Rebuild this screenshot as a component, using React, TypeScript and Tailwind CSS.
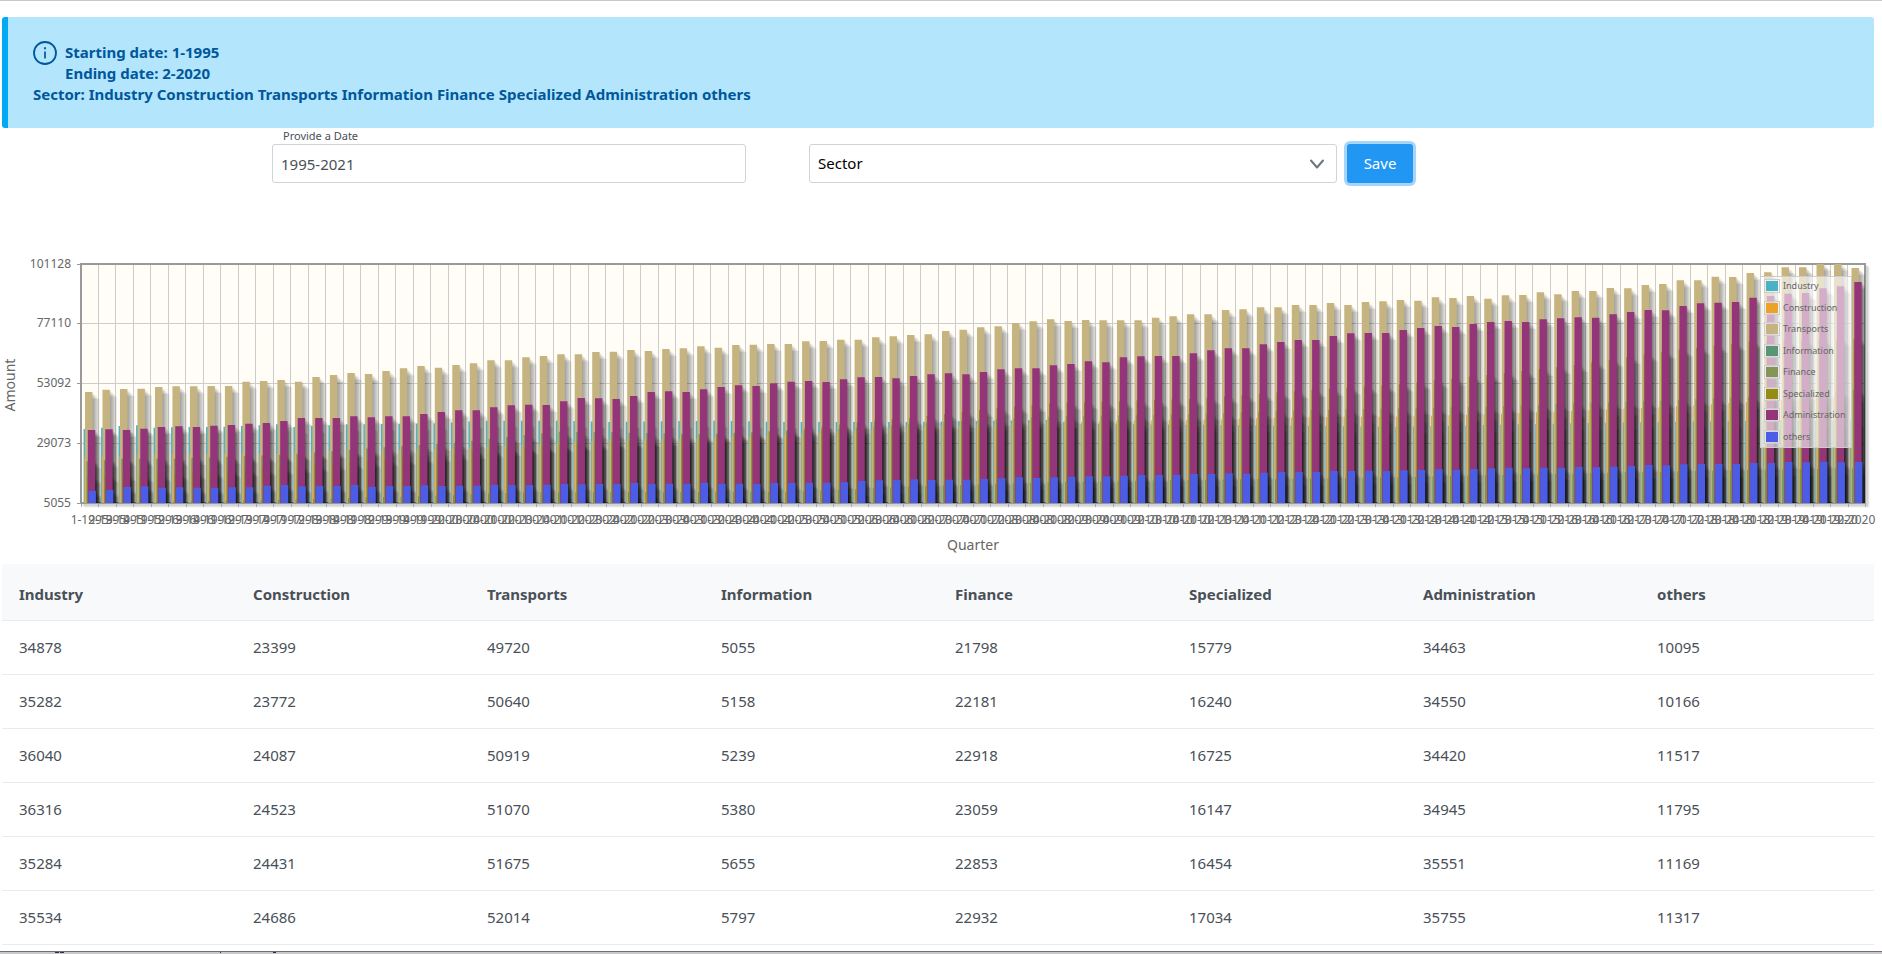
import React, { useState } from "react";

const SECTORS = [
  { name: "Industry", color: "#4bb2c5" },
  { name: "Construction", color: "#eaa228" },
  { name: "Transports", color: "#c5b47f" },
  { name: "Information", color: "#579575" },
  { name: "Finance", color: "#839557" },
  { name: "Specialized", color: "#958c12" },
  { name: "Administration", color: "#953579" },
  { name: "others", color: "#4b5de4" },
];

const ROWS = [
  [34878, 23399, 49720, 5055, 21798, 15779, 34463, 10095],
  [35282, 23772, 50640, 5158, 22181, 16240, 34550, 10166],
  [36040, 24087, 50919, 5239, 22918, 16725, 34420, 11517],
  [36316, 24523, 51070, 5380, 23059, 16147, 34945, 11795],
  [35284, 24431, 51675, 5655, 22853, 16454, 35551, 11169],
  [35534, 24686, 52014, 5797, 22932, 17034, 35755, 11317],
];

const QUARTERS = Array.from({ length: 102 }, (_, i) => `${(i % 4) + 1}-${1995 + Math.floor(i / 4)}`);

/* Plot geometry */
const LEFT = 81;
const RIGHT = 1865;
const TOP = 34;
const BOTTOM = 273;
const STEP = (RIGHT - LEFT) / QUARTERS.length;
const BAR_WIDTH = 7.4;
const BAR_SHIFT = 0.7;
const DEPTH = 744;

/* Bar levels are stored in thirds of a unit measured down from the chart's origin. */
type Keys = [number, number][];
const between = (keys: Keys) =>
  QUARTERS.map((_, i) => {
    const next = keys.findIndex(([k]) => k >= i);
    if (keys[next][0] === i) return keys[next][1];
    const [a, va] = keys[next - 1];
    const [b, vb] = keys[next];
    return va + ((vb - va) * (i - a)) / (b - a);
  });

const industry = between([
  [0, 522], [1, 518], [2, 513], [3, 511], [4, 518], [5, 517], [8, 515], [10, 511], [11, 508], [12, 516],
  [15, 508], [20, 505], [23, 497], [27, 497], [30, 501], [33, 499], [36, 497], [40, 501], [47, 501], [55, 495],
  [57, 507], [65, 510], [70, 512], [75, 516], [80, 510], [85, 505], [90, 501], [95, 498], [101, 496],
]);
const construction = between([
  [0, 607], [1, 604], [2, 602], [3, 599], [5, 597], [11, 595], [15, 586], [20, 582], [25, 570], [30, 555],
  [35, 550], [40, 539], [45, 524], [47, 515], [52, 508], [55, 499], [57, 500], [63, 495], [70, 486], [75, 485],
  [80, 478], [85, 468], [90, 457], [95, 441], [101, 422],
]);
const transports = [
  411, 404, 402, 401, 396, 394, 394, 393, 393, 380, 378, 375, 380, 366, 360, 354, 357, 348, 340, 333, 338, 330,
  325, 316, 316, 307, 303, 298, 298, 291, 290, 285, 288, 282, 280, 274, 278, 270, 269, 267, 267, 259, 258, 254,
  254, 247, 244, 240, 238, 228, 224, 217, 214, 204, 199, 193, 198, 195, 196, 196, 196, 188, 184, 178, 178, 165,
  163, 157, 157, 150, 150, 144, 150, 141, 139, 135, 137, 127, 129, 123, 131, 121, 120, 112, 118, 108, 108, 99,
  100, 90, 87, 76, 76, 65, 66, 54, 52, 37, 37, 26, 26, 39,
];
const information = between([
  [0, 744], [3, 742], [11, 735], [20, 722], [25, 712], [40, 710], [45, 700], [47, 695], [55, 682], [63, 675],
  [75, 667], [85, 655], [95, 645], [101, 640],
]);
const finance = between([
  [0, 619], [1, 616], [2, 611], [5, 611], [11, 600], [17, 577], [21, 563], [25, 540], [27, 530], [30, 532],
  [35, 537], [40, 528], [45, 515], [47, 506], [55, 485], [63, 478], [70, 465], [75, 460], [80, 455], [85, 445],
  [90, 437], [95, 425], [101, 405],
]);
const specialized = between([
  [0, 664], [1, 661], [2, 657], [3, 661], [5, 655], [11, 638], [20, 600], [25, 578], [30, 560], [35, 545],
  [40, 525], [45, 497], [47, 490], [50, 470], [55, 445], [63, 432], [70, 405], [75, 388], [80, 360], [85, 330],
  [90, 290], [95, 260], [101, 251],
]);
const administration = [
  525, 523, 525, 521, 516, 514, 516, 512, 510, 506, 504, 498, 489, 489, 489, 484, 487, 484, 484, 477, 471, 466,
  466, 457, 451, 449, 450, 439, 429, 430, 432, 423, 411, 409, 411, 403, 396, 391, 393, 385, 380, 378, 381, 373,
  367, 366, 370, 363, 358, 355, 358, 351, 343, 340, 340, 331, 327, 319, 322, 307, 304, 303, 303, 295, 286, 280,
  280, 268, 261, 255, 255, 243, 235, 234, 234, 225, 219, 213, 216, 207, 201, 198, 201, 193, 190, 187, 188, 178,
  171, 165, 166, 153, 145, 143, 141, 128, 123, 116, 114, 100, 94, 81,
];
const others = [
  707, 705, 696, 694, 698, 697, 698, 698, 697, 697, 692, 690, 694, 693, 693, 690, 695, 693, 693, 691, 693, 692,
  692, 689, 690, 690, 689, 687, 688, 687, 687, 684, 687, 686, 686, 683, 687, 686, 687, 684, 684, 683, 683, 682,
  678, 676, 675, 673, 675, 674, 674, 672, 670, 667, 669, 667, 665, 664, 664, 662, 660, 660, 659, 657, 657, 655,
  656, 653, 651, 651, 651, 648, 648, 647, 648, 646, 645, 643, 644, 642, 640, 638, 640, 638, 638, 636, 637, 635,
  633, 630, 631, 628, 627, 627, 627, 624, 624, 621, 622, 620, 622, 621,
];

const SERIES = [industry, construction, transports, information, finance, specialized, administration, others];

const barPath = (levels: number[], series: number, shift: number) =>
  levels
    .map((level, i) => {
      const x = LEFT + i * STEP + 2.6 + series * BAR_SHIFT + shift;
      const height = (DEPTH - level) / 3;
      return `M${x.toFixed(2)} ${(BOTTOM + shift).toFixed(2)}v${(-height).toFixed(2)}h${BAR_WIDTH}v${height.toFixed(2)}z`;
    })
    .join("");

const Y_TICKS = [101128, 77110, 53092, 29073, 5055];
const tickY = (i: number) => Math.floor(TOP + (i * (BOTTOM - TOP)) / 4) + 0.5;

function Chart() {
  const gridHeight = BOTTOM - TOP;
  return (
    <svg
      className="mt-[47px] block w-full font-['Noto_Sans','Open_Sans',sans-serif]"
      viewBox="0 0 1882 334"
      role="img"
      aria-label="Amount per quarter by sector"
    >
      <defs>
        <clipPath id="plot">
          <rect x={LEFT} y={TOP} width={RIGHT - LEFT} height={gridHeight} />
        </clipPath>
      </defs>

      <rect x={LEFT} y={TOP} width={RIGHT - LEFT} height={gridHeight} fill="#fffdf6" />
      <g stroke="#cccccc" strokeWidth="1" shapeRendering="crispEdges">
        {QUARTERS.map((q, i) => (
          <line key={q} x1={LEFT + i * STEP} x2={LEFT + i * STEP} y1={TOP} y2={BOTTOM} />
        ))}
        {Y_TICKS.map((t, i) => (
          <line key={t} x1={LEFT} x2={RIGHT} y1={tickY(i)} y2={tickY(i)} />
        ))}
      </g>

      <g fill="none" stroke="#000000" strokeOpacity="0.07" strokeWidth="3">
        {[1, 2, 3].map((n) => (
          <path key={n} d={`M${RIGHT + n} ${TOP + n}V${BOTTOM + n}H${LEFT + n}`} />
        ))}
      </g>
      <g stroke="#999999" strokeWidth="1" shapeRendering="crispEdges">
        {Y_TICKS.map((t, i) => (
          <line key={t} x1={LEFT - 4} x2={LEFT} y1={tickY(i)} y2={tickY(i)} />
        ))}
        {[...QUARTERS, "end"].map((q, i) => (
          <line key={q} x1={LEFT + i * STEP + 0.5} x2={LEFT + i * STEP + 0.5} y1={BOTTOM} y2={BOTTOM + 4} stroke="#aaaaaa" />
        ))}
      </g>
      <rect x={LEFT} y={TOP} width={RIGHT - LEFT} height={gridHeight} fill="none" stroke="#999999" strokeWidth="2" />

      <g clipPath="url(#plot)">
        <g fill="#000000" fillOpacity="0.08">
          {SERIES.map((levels, s) =>
            [1, 2, 3, 4, 5].map((n) => <path key={`${s}-${n}`} d={barPath(levels, s, n * 1.41)} />),
          )}
        </g>
        {SERIES.map((levels, s) => (
          <path key={s} d={barPath(levels, s, 0)} fill={SECTORS[s].color} />
        ))}
      </g>

      <g fill="#666666" fontSize="12">
        {Y_TICKS.map((t, i) => (
          <text key={t} x="71" y={Math.floor(tickY(i)) + 4} textAnchor="end">
            {t}
          </text>
        ))}
        {QUARTERS.map((q, i) => (
          <text key={q} x={LEFT + (i + 0.5) * STEP} y="294" textAnchor="middle">
            {q}
          </text>
        ))}
      </g>
      <g fill="#666666" fontSize="14" textAnchor="middle">
        <text x="973" y="320">Quarter</text>
        <text transform="translate(15 155) rotate(-90)">Amount</text>
      </g>

      <rect x="1760.5" y="46.5" width="91" height="171" fill="#ffffff" fillOpacity="0.6" stroke="#cccccc" />
      {SECTORS.map((s, i) => {
        const y = 49 + Math.round(i * 21.5);
        return (
          <g key={s.name}>
            <rect x="1764.5" y={y + 0.5} width="15" height="13" fill="#ffffff" fillOpacity="0.4" stroke="#cccccc" />
            <rect x="1766" y={y + 2} width="12" height="10" fill={s.color} />
            <text x="1783" y={y + 10} fill="#666666" fontSize="9">
              {s.name}
            </text>
          </g>
        );
      })}
    </svg>
  );
}

export default function App() {
  const [date, setDate] = useState("1995-2021");
  return (
    <div className="overflow-hidden border-t border-[#c8c8c8] bg-white font-['Noto_Sans','Open_Sans',sans-serif] text-[15px] text-[#495057]">
      <main className="pt-4">
        <section className="ml-[2px] mr-2 rounded-[3px] border-l-[6px] border-[#03a9f4] bg-[#b3e5fc] px-[25px] py-6 font-bold leading-[21px] text-[#01579b]">
          <div className="flex gap-2">
            <svg className="size-6 shrink-0" viewBox="0 0 24 24" fill="none" stroke="currentColor" aria-hidden="true">
              <circle cx="12" cy="12" r="11" strokeWidth="1.8" />
              <path d="M12 10.5v7" strokeWidth="1.7" />
              <path d="M12 6.2v2" strokeWidth="1.9" />
            </svg>
            <div className="pt-px">
              <p>Starting date: 1-1995</p>
              <p>Ending date: 2-2020</p>
            </div>
          </div>
          <p className="-mb-px">
            Sector: Industry Construction Transports Information Finance Specialized Administration others
          </p>
        </section>

        <form
          className="grid grid-cols-[272fr_474fr_63fr_528fr_10fr_66px_469fr] items-end"
          onSubmit={(e) => e.preventDefault()}
        >
          <div className="col-start-2">
            <label htmlFor="date" className="block pl-[11px] text-[11px] leading-4">
              Provide a Date
            </label>
            <input
              id="date"
              value={date}
              onChange={(e) => setDate(e.target.value)}
              className="block h-[39px] w-full rounded-[3px] border border-[#ced4da] bg-white px-2 text-[#495057] outline-none"
            />
          </div>
          <div className="relative col-start-4">
            <select
              aria-label="Sector"
              className="block h-[39px] w-full appearance-none rounded-[3px] border border-[#ced4da] bg-white px-2 text-black outline-none"
            >
              <option>Sector</option>
              {SECTORS.map((s) => (
                <option key={s.name}>{s.name}</option>
              ))}
            </select>
            <svg
              className="pointer-events-none absolute right-3 top-3 size-4"
              viewBox="0 0 16 16"
              fill="none"
              stroke="#6c757d"
              strokeWidth="2"
              strokeLinecap="round"
              strokeLinejoin="round"
              aria-hidden="true"
            >
              <path d="M2 4.5 8 11.5 14 4.5" />
            </svg>
          </div>
          <button
            type="submit"
            className="col-start-6 h-[39px] rounded-[3px] bg-[#2196f3] text-white shadow-[0_0_0_3px_#a6d5fa]"
          >
            Save
          </button>
        </form>

        <Chart />

        <div className="pl-[2px] pr-2">
          <table className="w-full table-fixed border-collapse text-left">
            <thead>
              <tr className="h-14 border-b border-[#e9ecef] bg-[#f8f9fa]">
                {SECTORS.map((s) => (
                  <th key={s.name} scope="col" className="px-[17px] pt-1 font-bold">
                    {s.name}
                  </th>
                ))}
              </tr>
            </thead>
            <tbody>
              {ROWS.map((row) => (
                <tr key={row[0]} className="h-[54px] border-b border-[#e9ecef]">
                  {row.map((value, i) => (
                    <td key={i} className="px-[17px]">
                      {value}
                    </td>
                  ))}
                </tr>
              ))}
            </tbody>
          </table>
        </div>
      </main>
      <footer className="mt-[6px] h-1 border-t border-[#707070] bg-[#cbc8cb]">
        <svg className="block h-[3px] w-[300px]" viewBox="0 0 300 3" fill="#2b2b4a" aria-hidden="true">
          <path d="M55 0h4v1h-4zM60 0h4v1h-4zM220 0h1v1h-1zM273 0h3v1h-3z" />
        </svg>
      </footer>
    </div>
  );
}
